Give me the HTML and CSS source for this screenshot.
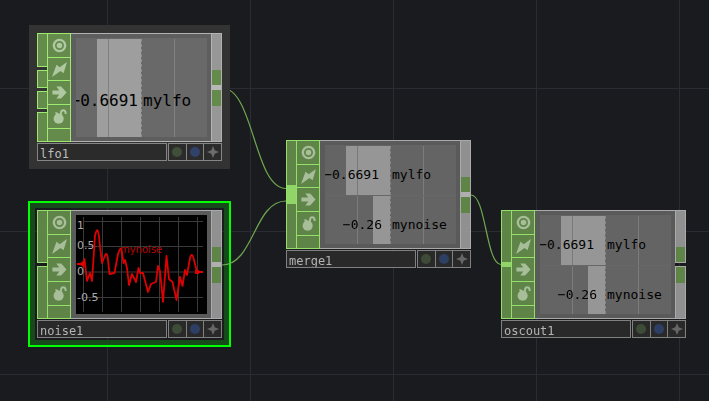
FILE: index.html
```
<!DOCTYPE html>
<html lang="en">
<head>
<meta charset="utf-8">
<title>Network editor</title>
<link rel="stylesheet" href="styles.css">
</head>
<body>
<svg class="symbols" aria-hidden="true">
  <symbol id="i-view" viewBox="0 0 14 14"><circle cx="7" cy="7" r="5.3" fill="none" stroke="currentColor" stroke-width="2.2"/><circle cx="7" cy="7" r="2.6" fill="currentColor"/></symbol>
  <symbol id="i-bolt" viewBox="0 0 14 14"><path fill="currentColor" d="M14 0 10.8 10.4 8 8.4 0 14 4.2 2.6 7.2 5Z"/></symbol>
  <symbol id="i-arrow" viewBox="0 0 14 14"><path fill="currentColor" d="M.4 5.2H6.8L4 1.5H8.500L13.600 7 8.500 12.500H4L6.800 8.800H.4Z"/></symbol>
  <symbol id="i-lock" viewBox="0 0 14 14"><circle cx="6.200" cy="9" r="4.700" fill="currentColor"/><path fill="currentColor" d="M3 2.800 5.600 3.400 6.600 6 3.800 6Z"/><path d="M8.400 5.400V3.600Q8.400 1.200 10.600 1.200 12.800 1.200 12.800 4.600" fill="none" stroke="currentColor" stroke-width="1.800"/></symbol>
  <symbol id="i-star" viewBox="0 0 12 12"><path fill="currentColor" d="M6 0 7.700 4.300 12 6 7.700 7.700 6 12 4.300 7.700 0 6 4.300 4.300Z"/></symbol>
</svg>

<main class="network">
  <article class="node node-noise selected">
    <div class="node-content">
      <div class="node-body">
        <div class="inputs"><i class="slot slot-half"></i><i class="slot slot-rest"></i></div>
        <div class="flags">
          <button aria-label="Viewer"><svg><use href="#i-view"/></svg></button>
          <button aria-label="Cook"><svg><use href="#i-bolt"/></svg></button>
          <button aria-label="Export"><svg><use href="#i-arrow"/></svg></button>
          <button aria-label="Lock"><svg><use href="#i-lock"/></svg></button>
          <span></span>
        </div>
        <div class="viewer">
          <svg class="plot" viewBox="0 0 131 99">
            <g class="plot-grid">
              <path d="M7.5 2V97M26.5 2V97M45.5 2V97M64.5 2V97M83.5 2V97M102.5 2V97M121.5 2V97"/>
              <path d="M7 6.5H127M7 31.5H127M7 57H127M7 82.5H127"/>
            </g>
            <g class="plot-axis">
              <text x="1" y="14">1</text><text x="1" y="34">0.5</text><text x="1" y="60">0</text><text x="1" y="86">-0.5</text>
            </g>
            <text class="plot-name" x="44" y="38">mynoise</text>
            <path class="plot-line" d="M1 49H7L8.5 44 11 66 14 58 16 66 19 21Q22 7 23.5 27L26 48 28 43Q31 34 32 45L33.5 59 38.5 58 42 39Q45 29 46 38L47.5 48 49 45 51 53 53 70 56 59 60 67 62.5 53 64 58H67L72 77 75 69 80 67 82 51 84 56 87 87 90.5 41 93 64 96.5 67 100.5 85 104 62 106.5 71 109 55 111 60 114 43Q116 36 118 45L121 57H127"/>
            <path class="plot-ends" d="M3 49 8.5 45V53ZM119 55H123V59H119Z"/>
          </svg>
        </div>
        <div class="outputs"><div class="port port-whole"><i class="pin"></i><i class="pin"></i></div></div>
      </div>
      <footer class="node-label">
        <input type="text" aria-label="Node name" value="noise1">
        <div class="badges"><button class="dot green" aria-label="Common"></button><button class="dot blue" aria-label="Info"></button><button aria-label="Activate"><svg><use href="#i-star"/></svg></button></div>
      </footer>
    </div>
  </article>

  <svg class="wires" width="709" height="401" aria-hidden="true">
    <path d="M222 88C254 88 254 188.5 286 188.5"/>
    <path d="M222 265C254 265 254 201 286 201"/>
    <path d="M471 195C486 195 486 264.5 501 264.5"/>
  </svg>

  <article class="node node-lfo hovered">
    <div class="node-content">
      <div class="node-body">
        <div class="inputs"><i class="slot slot-first"></i><i class="slot slot-small"></i><i class="slot slot-small"></i><i class="slot slot-rest"></i></div>
        <div class="flags">
          <button aria-label="Viewer"><svg><use href="#i-view"/></svg></button>
          <button aria-label="Cook"><svg><use href="#i-bolt"/></svg></button>
          <button aria-label="Export"><svg><use href="#i-arrow"/></svg></button>
          <button aria-label="Lock"><svg><use href="#i-lock"/></svg></button>
          <span></span>
        </div>
        <div class="viewer">
          <div class="bars large">
            <div class="channel"><div class="value"><i class="bar" style="width:67%"></i><b>−0.6691</b></div><span class="name">mylfo</span></div>
          </div>
        </div>
        <div class="outputs"><div class="port port-whole"><i class="pin"></i><i class="pin"></i></div></div>
      </div>
      <footer class="node-label">
        <input type="text" aria-label="Node name" value="lfo1">
        <div class="badges"><button class="dot green" aria-label="Common"></button><button class="dot blue" aria-label="Info"></button><button aria-label="Activate"><svg><use href="#i-star"/></svg></button></div>
      </footer>
    </div>
  </article>

  <article class="node node-merge">
    <div class="node-content">
      <div class="node-body">
        <div class="inputs"><i class="slot slot-rest"><i class="plug plug-tall"></i></i></div>
        <div class="flags">
          <button aria-label="Viewer"><svg><use href="#i-view"/></svg></button>
          <button aria-label="Cook"><svg><use href="#i-bolt"/></svg></button>
          <button aria-label="Export"><svg><use href="#i-arrow"/></svg></button>
          <button aria-label="Lock"><svg><use href="#i-lock"/></svg></button>
          <span></span>
        </div>
        <div class="viewer">
          <div class="bars">
            <div class="channel"><div class="value"><i class="bar" style="width:67%"></i><b>−0.6691</b></div><span class="name">mylfo</span></div>
            <div class="channel"><div class="value short"><i class="bar" style="width:26%"></i><b>−0.26</b></div><span class="name">mynoise</span></div>
          </div>
        </div>
        <div class="outputs"><div class="port port-whole"><i class="pin"></i><i class="pin"></i></div></div>
      </div>
      <footer class="node-label">
        <input type="text" aria-label="Node name" value="merge1">
        <div class="badges"><button class="dot green" aria-label="Common"></button><button class="dot blue" aria-label="Info"></button><button aria-label="Activate"><svg><use href="#i-star"/></svg></button></div>
      </footer>
    </div>
  </article>

  <article class="node node-oscout">
    <div class="node-content">
      <div class="node-body">
        <div class="inputs"><i class="slot slot-rest"><i class="plug"></i></i></div>
        <div class="flags">
          <button aria-label="Viewer"><svg><use href="#i-view"/></svg></button>
          <button aria-label="Cook"><svg><use href="#i-bolt"/></svg></button>
          <button aria-label="Export"><svg><use href="#i-arrow"/></svg></button>
          <button aria-label="Lock"><svg><use href="#i-lock"/></svg></button>
          <span></span>
        </div>
        <div class="viewer">
          <div class="bars">
            <div class="channel"><div class="value"><i class="bar" style="width:67%"></i><b>−0.6691</b></div><span class="name">mylfo</span></div>
            <div class="channel"><div class="value short"><i class="bar" style="width:26%"></i><b>−0.26</b></div><span class="name">mynoise</span></div>
          </div>
        </div>
        <div class="outputs"><div class="port port-top"><i class="pin"></i></div><div class="port port-bottom"><i class="pin"></i></div></div>
      </div>
      <footer class="node-label">
        <input type="text" aria-label="Node name" value="oscout1">
        <div class="badges"><button class="dot green" aria-label="Common"></button><button class="dot blue" aria-label="Info"></button><button aria-label="Activate"><svg><use href="#i-star"/></svg></button></div>
      </footer>
    </div>
  </article>
</main>
</body>
</html>
```
FILE: styles.css
```
:root {
  --line: #9eea70;
  --green: #648b4b;
  --edge: #b2b2b2;
  --mono: "DejaVu Sans Mono", monospace;
}

* { box-sizing: border-box; }

body {
  margin: 0;
  background: #1a1b1f;
  font-family: var(--mono);
}

button, input {
  margin: 0;
  padding: 0;
  border: 0;
  border-radius: 0;
  background: none;
  font: inherit;
}

.symbols { position: absolute; width: 0; height: 0; }

.network {
  position: relative;
  min-height: 100vh;
  overflow: hidden;
  background-image:
    linear-gradient(#2a2b33 1px, transparent 1px),
    linear-gradient(90deg, #2a2b33 1px, transparent 1px);
  background-size: 143px 143px;
  background-position: 107px 88px;
}

.wires { position: absolute; left: 0; top: 0; fill: none; stroke: #6fa850; stroke-width: 1.2; }

/* Nodes sit freely on the canvas */
.node { position: absolute; }
.node-lfo { left: 29px; top: 25px; }
.node-noise { left: 28px; top: 201px; }
.node-merge { left: 286px; top: 140px; }
.node-oscout { left: 501px; top: 210px; }

.node-content { width: 185px; opacity: 0.95; }
.hovered { padding: 8px; background: #333; }
.hovered .node-content { opacity: 1; }
.selected { padding: 7px; border: 2px solid #0f0; box-shadow: inset 0 0 0 5px #164a1a; }

.node-body { display: flex; height: 109px; }

.inputs { width: 10px; display: flex; flex-direction: column; gap: 3px; }
.slot {
  display: flex;
  align-items: center;
  background: var(--green);
  border: 1px solid var(--line);
  border-right: 0;
}
.slot-first { height: 34px; }
.slot-small { height: 18px; }
.slot-half { height: 53px; }
.slot-rest { flex: 1; }
.plug { width: 100%; height: 5px; background: #98e06d; }
.plug-tall { height: 19px; }

.flags {
  width: 24px;
  display: grid;
  grid-template-rows: 24px 23px 24px 24px 1fr;
  background: var(--green);
  border: 1px solid var(--line);
  border-top: 0;
}
.flags > * { display: flex; align-items: center; justify-content: center; border-top: 1px solid var(--line); color: #afc8a1; }
.flags svg { width: 15px; height: 15px; }

.viewer {
  flex: 1;
  padding: 4px 3px 4px 5px;
  background: #5e5e5e;
  border: 1px solid var(--edge);
  border-width: 1px 0;
}

.bars {
  height: 99px;
  width: 131px;
  padding: 1px 0 0;
  display: flex;
  flex-direction: column;
  overflow: hidden;
  background:
    linear-gradient(#828282, #828282) 32px 1px / 1px 98px no-repeat,
    linear-gradient(#828282, #828282) 98px 1px / 1px 98px no-repeat,
    #696969;
}
.channel { flex: 1; display: flex; color: #000; font-size: 13px; line-height: 16px; }
.channel + .channel { border-top: 1px solid #6c6c6c; }
.value {
  position: relative;
  width: 66px;
  padding: 21px 11px 0 0;
  display: flex;
  justify-content: flex-end;
  border-right: 1px dashed #8c8c8c;
}
.short { padding-right: 8px; }
.value b { position: relative; font-weight: 400; }
.bar {
  position: absolute;
  right: 0;
  top: 0;
  bottom: 0;
  background: linear-gradient(#808080, #808080) left 11px top / 1px 100% no-repeat #9e9e9e;
}
.short .bar { background: #9e9e9e; }
.name { padding: 21px 0 0 1px; }
.large .channel { font-size: 16px; line-height: 20px; }
.large .value { padding: 52px 3px 0 0; }
.large .name { padding-top: 52px; }

.plot { display: block; width: 131px; height: 99px; background: #000; }
.plot-grid { stroke: #3d3d3d; stroke-width: 1; }
.plot-axis { fill: #b4b4b4; font: 11px "DejaVu Sans", sans-serif; }
.plot-name { fill: #c40000; font: 10px "DejaVu Sans", sans-serif; }
.plot-line { fill: none; stroke: #e80000; stroke-width: 1.8; stroke-linejoin: round; }
.plot-ends { fill: #e80000; }

.outputs { width: 11px; display: flex; flex-direction: column; gap: 3px; }
.port { background: #979797; border: 1px solid var(--edge); display: flex; flex-direction: column; }
.pin { height: 15px; background: var(--green); }
.port-whole { flex: 1; padding-top: 36px; }
.pin + .pin { height: 21px; border-top: 5px solid #b8b8b8; }
.port-top, .port-bottom { flex: 1; }
.port-top { justify-content: flex-end; }
.port-bottom .pin { height: 16px; }

.node-label { display: flex; gap: 1px; height: 18px; margin-top: 1px; }
.node-label input {
  flex: 1;
  min-width: 0;
  padding: 3px 2px 0;
  border: 1px solid #868686;
  background: #2b2b2c;
  color: #bdbdbd;
  font-size: 12px;
}
.badges { width: 54px; display: flex; border: 1px solid #868686; background: #2b2b2c; }
.badges button { flex: 1; display: flex; align-items: center; justify-content: center; color: #6c6c6c; }
.badges button + button { border-left: 1px solid #868686; }
.badges svg { width: 12px; height: 12px; }
.dot::before { content: ""; width: 10px; height: 10px; border-radius: 50%; }
.green::before { background: #414f39; }
.blue::before { background: #304269; }
```
